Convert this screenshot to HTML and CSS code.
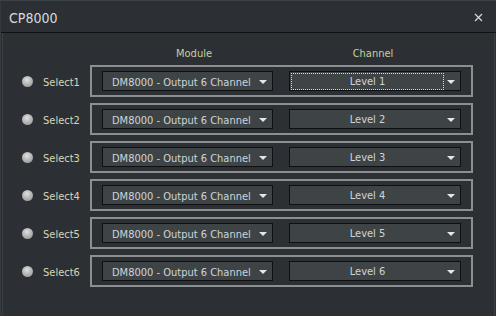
FILE: index.html
```
<!DOCTYPE html>
<html>
<head>
<meta charset="utf-8">
<link rel="stylesheet" href="styles.css">
</head>
<body>
<div class="window">
  <div class="titlebar">
    <span class="title">CP8000</span>
    <svg class="close" width="9" height="9" viewBox="0 0 9 9"><path d="M1 1L8 8M8 1L1 8" stroke="#d0d4d8" stroke-width="1.3" fill="none"/></svg>
  </div>
  <div class="content">
    <div class="headers">
      <div class="h-module">Module</div>
      <div class="h-channel">Channel</div>
    </div>
    <div class="rows">
      <div class="row">
        <span class="radio"></span><span class="label">Select1</span>
        <div class="group">
          <div class="combo module"><span class="text">DM8000 - Output 6 Channel</span><span class="arrow"></span></div>
          <div class="combo channel"><span class="text focus">Level 1</span><span class="arrow"></span></div>
        </div>
      </div>
      <div class="row">
        <span class="radio"></span><span class="label">Select2</span>
        <div class="group">
          <div class="combo module"><span class="text">DM8000 - Output 6 Channel</span><span class="arrow"></span></div>
          <div class="combo channel"><span class="text">Level 2</span><span class="arrow"></span></div>
        </div>
      </div>
      <div class="row">
        <span class="radio"></span><span class="label">Select3</span>
        <div class="group">
          <div class="combo module"><span class="text">DM8000 - Output 6 Channel</span><span class="arrow"></span></div>
          <div class="combo channel"><span class="text">Level 3</span><span class="arrow"></span></div>
        </div>
      </div>
      <div class="row">
        <span class="radio"></span><span class="label">Select4</span>
        <div class="group">
          <div class="combo module"><span class="text">DM8000 - Output 6 Channel</span><span class="arrow"></span></div>
          <div class="combo channel"><span class="text">Level 4</span><span class="arrow"></span></div>
        </div>
      </div>
      <div class="row">
        <span class="radio"></span><span class="label">Select5</span>
        <div class="group">
          <div class="combo module"><span class="text">DM8000 - Output 6 Channel</span><span class="arrow"></span></div>
          <div class="combo channel"><span class="text">Level 5</span><span class="arrow"></span></div>
        </div>
      </div>
      <div class="row">
        <span class="radio"></span><span class="label">Select6</span>
        <div class="group">
          <div class="combo module"><span class="text">DM8000 - Output 6 Channel</span><span class="arrow"></span></div>
          <div class="combo channel"><span class="text">Level 6</span><span class="arrow"></span></div>
        </div>
      </div>
    </div>
  </div>
</div>
</body>
</html>
```
FILE: styles.css
```
* { box-sizing: border-box; }
html, body { margin: 0; padding: 0; }
body {
  width: 496px;
  height: 316px;
  overflow: hidden;
  background: #2c3034;
  font-family: "DejaVu Sans Condensed", "DejaVu Sans", sans-serif;
}
.window {
  width: 496px;
  height: 316px;
  display: flex;
  flex-direction: column;
  background: #2c3034;
  border-top: 1px solid #3e4347;
  border-left: 1px solid #353a3e;
}
.titlebar {
  height: 32px;
  flex: none;
  display: flex;
  align-items: center;
  justify-content: space-between;
  padding: 0 13px 0 8px;
  border-bottom: 1px solid #0f1113;
}
.title {
  color: #d6dade;
  font-size: 14px;
  margin-top: 2px;
}
.close {
  display: block;
  margin-top: 2px;
}
.content {
  flex: 1;
  margin-left: 1px;
  margin-right: 1px;
  border-left: 1px solid #3a3f43;
  border-right: 1px solid #3a3f43;
  display: flex;
  flex-direction: column;
}
.headers {
  display: flex;
  height: 32px;
  padding-top: 14px;
  padding-left: 98px;
  font-size: 11px;
  color: #cdcd9c;
}
.h-module { width: 186px; text-align: center; }
.h-channel { width: 172px; text-align: center; }
.rows {
  display: flex;
  flex-direction: column;
  gap: 6px;
}
.row {
  display: flex;
  align-items: center;
  height: 32px;
}
.radio {
  width: 11px;
  height: 11px;
  border-radius: 50%;
  margin-left: 19px;
  background: radial-gradient(circle at 45% 35%, #e0e0e0 0%, #b8b8b8 45%, #8a8a8a 100%);
  flex: none;
}
.label {
  width: 47px;
  margin-left: 10px;
  font-size: 11px;
  color: #d6d6b8;
  padding-top: 3px;
}
.group {
  width: 383px;
  height: 32px;
  border: 2px solid #8b8f90;
  display: flex;
  align-items: center;
  padding-left: 10px;
  gap: 16px;
}
.combo {
  height: 20px;
  background: #3e4446;
  border: 1px solid #0e1011;
  display: flex;
  align-items: center;
  position: relative;
  font-size: 11px;
  color: #cfd4d8;
}
.combo.module { width: 171px; padding-left: 9px; padding-top: 2px; }
.combo.channel { width: 172px; padding-left: 1px; }
.combo .text { white-space: nowrap; }
.combo.channel .text {
  width: 153px;
  height: 17px;
  line-height: 14px;
  padding-top: 1px;
  text-align: center;
  border: 1px solid transparent;
}
.combo.channel .text.focus { border: 1px dotted #d8dcdf; }
.arrow {
  position: absolute;
  right: 5px;
  top: 8px;
  width: 0;
  height: 0;
  border-left: 4px solid transparent;
  border-right: 4px solid transparent;
  border-top: 4px solid #e4e6e8;
}
```
